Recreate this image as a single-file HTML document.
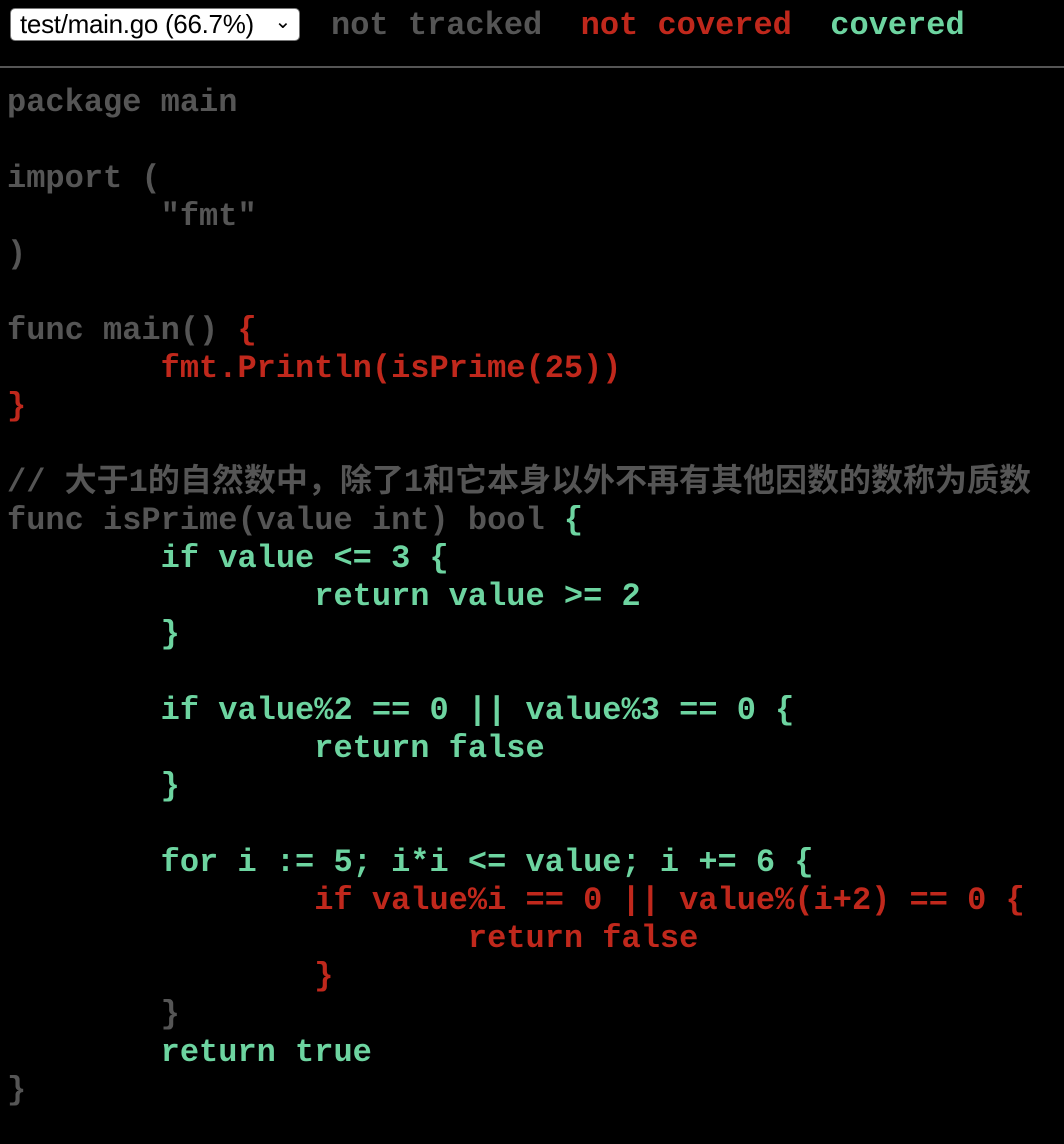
<!DOCTYPE html>
<html><head><meta charset="utf-8"><style>
html,body{margin:0;background:#000;width:1064px;height:1144px;overflow:hidden}
#top{position:absolute;left:0;top:0;width:1064px;height:66px;border-bottom:2px solid #555}
#sel{position:absolute;left:10px;top:8px;width:290px;height:33px;background:#fff;border:1px solid #777;border-radius:5px;box-sizing:border-box;font:26px "Liberation Sans",sans-serif;color:#000;line-height:31px;padding-left:9px;letter-spacing:-0.3px}
#sel span{position:absolute;right:8px;top:-2px;font-size:20px}
#legend{position:absolute;left:331px;top:7px;font:bold 32px "Liberation Mono",monospace;line-height:38px;white-space:pre}
pre{position:absolute;left:7px;top:84px;margin:0;font:bold 32px "Liberation Mono","Noto Sans CJK SC",monospace;line-height:38px;color:#555;tab-size:8}
.r{color:#c0281c}.g{color:#6dd4a0}.n{color:#555}
</style></head><body>
<div id="top"><div id="sel">test/main.go (66.7%)<span>&#8964;</span></div>
<div id="legend"><span class="n">not tracked</span>  <span class="r">not covered</span>  <span class="g">covered</span></div></div>
<pre>package main

import (
	"fmt"
)

func main() <span class="r">{
	fmt.Println(isPrime(25))
}</span>

// 大于1的自然数中，除了1和它本身以外不再有其他因数的数称为质数
func isPrime(value int) bool <span class="g">{
	if value &lt;= 3 {
		return value &gt;= 2
	}

	if value%2 == 0 || value%3 == 0 {
		return false
	}

	for i := 5; i*i &lt;= value; i += 6 {</span>
		<span class="r">if value%i == 0 || value%(i+2) == 0 {
			return false
		}</span>
	<span class="n">}</span>
	<span class="g">return true</span>
}</pre>
</body></html>
